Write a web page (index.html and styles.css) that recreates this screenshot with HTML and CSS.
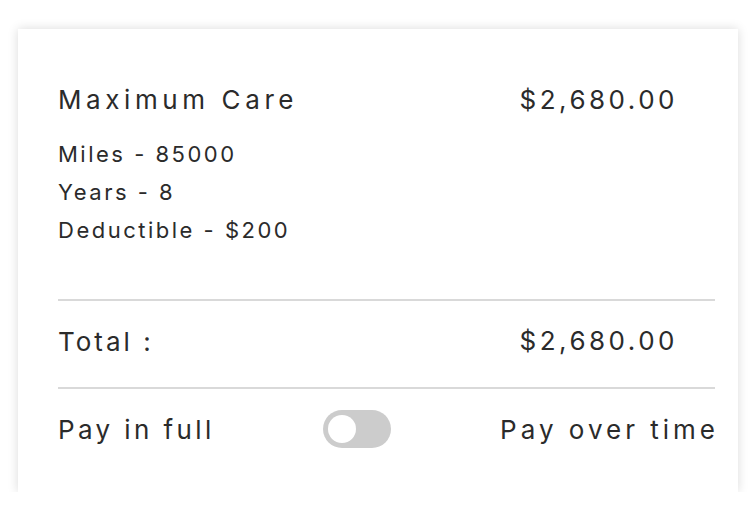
FILE: index.html
```html
<!DOCTYPE html>
<html>
<head>
    <meta charset="utf-8">
    <title>Plan summary</title>
    <link rel="stylesheet" href="styles.css">
</head>
<body>
    <div class="card">
        <div class="plan">
            <div class="plan-info">
                <div class="plan-name">Maximum Care</div>
                <div class="plan-detail">Miles - 85000</div>
                <div class="plan-detail">Years - 8</div>
                <div class="plan-detail">Deductible - $200</div>
            </div>
            <div class="price">$2,680.00</div>
        </div>
        <div class="total">
            <span>Total :</span>
            <span class="price">$2,680.00</span>
        </div>
        <div class="pay">
            <span>Pay in full</span>
            <span class="toggle"><span class="knob"></span></span>
            <span class="pay-later">Pay over time</span>
        </div>
    </div>
</body>
</html>
```

FILE: styles.css
```css
html,
body {
    margin: 0;
    padding: 0;
    background: #fff;
}

body {
    padding: 29px 16px 0 18px;
    font-family: Inter, "Liberation Sans", sans-serif;
    color: #2b2b2b;
}

.card {
    width: 720px;
    height: 463px;
    box-sizing: border-box;
    padding: 56px 23px 0 40px;
    background: #fff;
    box-shadow: 0 0 10px rgba(0, 0, 0, .15);
}

.plan {
    display: flex;
    justify-content: space-between;
    padding: 0 40px 50px 0;
    border-bottom: 2px solid #d9d9d9;
}

.plan-name {
    font-size: 26px;
    line-height: 30px;
    letter-spacing: 4.6px;
    margin-bottom: 20px;
}

.plan-detail {
    font-size: 22px;
    line-height: 38px;
    letter-spacing: 2.5px;
}

.price {
    font-size: 26px;
    line-height: 30px;
    letter-spacing: 3.5px;
    margin-right: -3px;
}

.total {
    display: flex;
    justify-content: space-between;
    align-items: center;
    height: 80px;
    padding: 0 40px 6px 0;
    font-size: 26px;
    letter-spacing: 3px;
    border-bottom: 2px solid #d9d9d9;
}

.pay {
    display: flex;
    justify-content: space-between;
    align-items: center;
    height: 80px;
    font-size: 26px;
    letter-spacing: 3.4px;
}

.pay-later {
    letter-spacing: 4px;
    margin-right: -4px;
}

.toggle {
    display: flex;
    align-items: center;
    width: 68px;
    height: 38px;
    box-sizing: border-box;
    padding: 0 5px;
    border-radius: 19px;
    background: #cccccc;
}

.knob {
    width: 28px;
    height: 28px;
    border-radius: 50%;
    background: #fff;
}
```
